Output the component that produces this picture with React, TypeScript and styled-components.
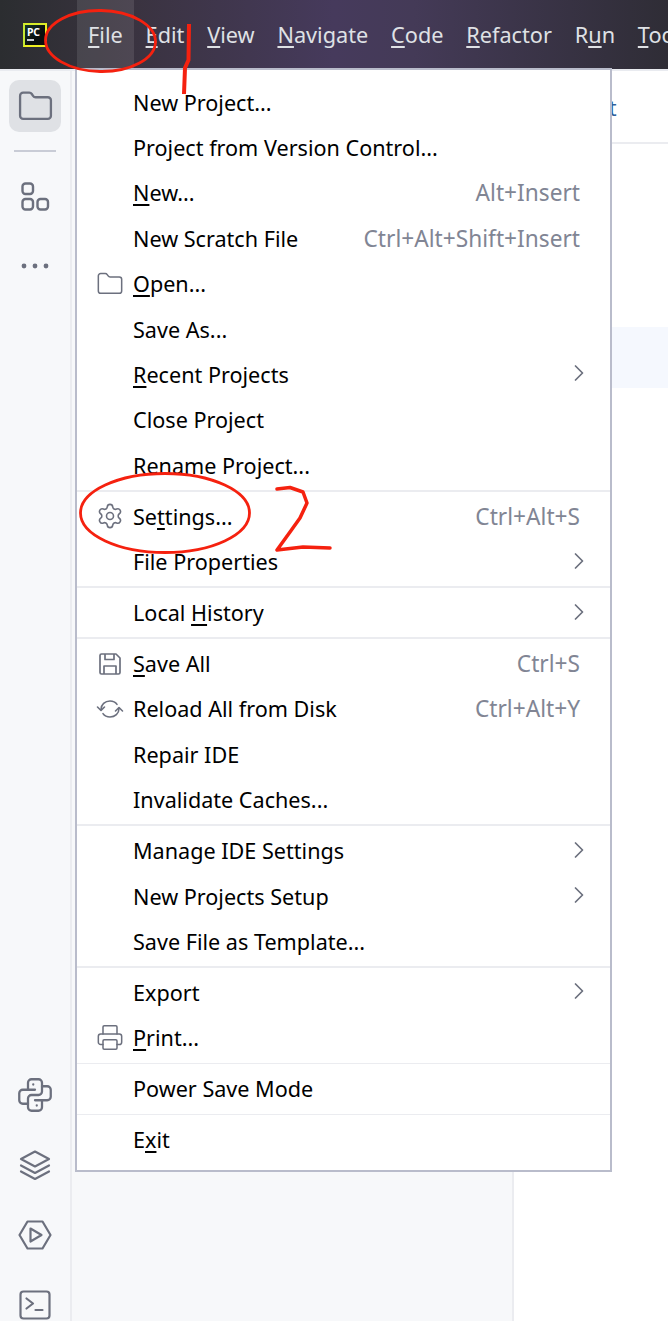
import React from 'react';
import styled, { createGlobalStyle } from 'styled-components';
import { ChevronRight, Folder, Printer, Settings } from 'lucide-react';
import { TbBrandPython } from 'react-icons/tb';

const GlobalStyle = createGlobalStyle`
	html,
	body {
		margin: 0;
		padding: 0;
		background: #ffffff;
	}
	* {
		box-sizing: border-box;
	}
`;

const FONT = `'Noto Sans', 'Open Sans', sans-serif`;

const Frame = styled.div`
	position: relative;
	width: 668px;
	height: 1321px;
	overflow: hidden;
	font-family: ${FONT};
	display: flex;
	flex-direction: column;
`;

const TitleBar = styled.header`
	height: 69px;
	flex-shrink: 0;
	display: flex;
	align-items: stretch;
	padding-left: 23px;
	overflow: hidden;
	background: linear-gradient(90deg, #2b2d30 0%, #3a3340 20%, #463a5c 50%, #443a57 62%, #2f2d36 100%);
`;

const Logo = styled.div`
	width: 24px;
	height: 24px;
	margin-top: 23px;
	margin-right: 30px;
	flex-shrink: 0;
	border: 2.5px solid #f0f020;
	border-top-color: #d8ec28;
	border-left-color: #c4e832;
	background: linear-gradient(135deg, #17352a 0%, #0a0f0d 60%);
	color: #ffffff;
	font-size: 10.5px;
	font-weight: 700;
	line-height: 12px;
	padding: 1px 0 0 2px;
	letter-spacing: -0.2px;
	display: flex;
	flex-direction: column;
	&::after {
		content: '';
		width: 7px;
		height: 1.5px;
		margin-top: 1px;
		background: #c8cbd0;
	}
`;

const MenuBarItem = styled.div<{ $active?: boolean }>`
	display: flex;
	align-items: center;
	padding: 0 11.7px 0 11.1px;
	flex-shrink: 0;
	color: #dfe1e5;
	font-size: 21.7px;
	background: ${({ $active }) => ($active ? 'rgba(255, 255, 255, 0.1)' : 'transparent')};
`;

const Mnemonic = styled.span`
	text-decoration: underline;
	text-decoration-thickness: 2px;
	text-underline-offset: 2.5px;
	text-decoration-skip-ink: none;
`;

const Body = styled.div`
	flex: 1;
	display: flex;
	min-height: 0;
	border-top: 2px solid #e9ebf0;
`;

const Stripe = styled.nav`
	width: 72px;
	flex-shrink: 0;
	background: #f7f8fa;
	border-right: 2px solid #ebecf0;
	display: flex;
	flex-direction: column;
	justify-content: space-between;
	padding-top: 9px;
	color: #6c707e;
`;

const StripeGroup = styled.div<{ $bottom?: boolean }>`
	display: flex;
	flex-direction: column;
	align-items: center;
	gap: ${({ $bottom }) => ($bottom ? '18px' : '17px')};
	margin-bottom: ${({ $bottom }) => ($bottom ? '-10px' : '0')};
`;

const StripeButton = styled.div<{ $selected?: boolean }>`
	width: 52px;
	height: 52px;
	flex-shrink: 0;
	display: flex;
	align-items: center;
	justify-content: center;
	border-radius: 10px;
	background: ${({ $selected }) => ($selected ? '#dfe1e5' : 'transparent')};
`;

const StripeDivider = styled.div`
	width: 42px;
	height: 2px;
	margin: 1px 0 2px;
	background: #c9ccd6;
`;

const ProjectPanel = styled.aside`
	width: 442px;
	flex-shrink: 0;
	background: #f7f8fa;
	border-right: 2px solid #ebecf0;
`;

const EditorArea = styled.main`
	flex: 1;
	background: #ffffff;
	display: flex;
	flex-direction: column;
`;

const EditorHeader = styled.div`
	height: 73px;
	flex-shrink: 0;
	border-bottom: 2px solid #ebecf0;
	padding: 24px 0 0 95px;
	color: #2f5f9a;
	font-size: 21px;
	line-height: 26px;
`;

const SelectedRow = styled.div`
	height: 61px;
	margin-top: 183px;
	background: #f5f8fe;
`;

const Menu = styled.div`
	position: absolute;
	left: 75px;
	top: 68px;
	width: 537px;
	height: 1104px;
	background: #ffffff;
	border: 2px solid #b9bccb;
	padding: 9.4px 0 6px;
	display: flex;
	flex-direction: column;
`;

const MenuRow = styled.div`
	height: 45.4px;
	flex-shrink: 0;
	display: flex;
	align-items: center;
	padding: 0 30px 0 56px;
	position: relative;
	color: #000000;
	font-size: 21.6px;
`;

const RowIcon = styled.span`
	position: absolute;
	left: 19px;
	top: 50%;
	transform: translateY(-50%);
	width: 28px;
	height: 28px;
	display: flex;
	align-items: center;
	justify-content: center;
	color: #6c707e;
`;

const RowLabel = styled.span`
	flex: 1;
	white-space: nowrap;
`;

const Shortcut = styled.span`
	color: #818594;
	white-space: nowrap;
	font-size: 22.7px;
`;

const Arrow = styled.span`
	display: flex;
	color: #6c707e;
	margin-right: -13px;
	margin-top: -2px;
`;

const Separator = styled.div`
	height: 1.6px;
	flex-shrink: 0;
	margin: 2px 0;
	background: #ebecf0;
`;

const Annotations = styled.svg`
	position: absolute;
	left: 0;
	top: 0;
	width: 668px;
	height: 1321px;
	pointer-events: none;
`;

type Entry =
	| 'separator'
	| {
			label: string;
			at?: number;
			shortcut?: string;
			submenu?: boolean;
			icon?: React.ReactNode;
	  };

function ReloadIcon() {
	return (
		<svg width="28" height="26" viewBox="0 0 28 26" fill="none" stroke="currentColor" strokeWidth="1.6" strokeLinecap="round" strokeLinejoin="round">
			<path d="M5 13.5C5 8.5 9 5 14 5c3 0 5.5 1.2 7 3.4" />
			<path d="M23 12.5c0 5-4 8.5-9 8.5-3 0-5.5-1.2-7-3.4" />
			<path d="M1.5 11 5 14.5 8.5 11" />
			<path d="M19.5 15 23 11.5l3.5 3.5" />
		</svg>
	);
}

function SaveIcon() {
	return (
		<svg width="24" height="24" viewBox="0 0 24 24" fill="none" stroke="currentColor" strokeWidth="1.7" strokeLinejoin="round">
			<path d="M2 3.500A1.500 1.500 0 0 1 3.500 2H18l4 4v14.500a1.500 1.500 0 0 1-1.500 1.500h-17A1.500 1.500 0 0 1 2 20.500Z" />
			<path d="M7 2v5.500h9V2" />
			<path d="M6 22v-8h12v8" />
		</svg>
	);
}

const ENTRIES: Entry[] = [
	{ label: 'New Project...' },
	{ label: 'Project from Version Control...' },
	{ label: 'New...', at: 0, shortcut: 'Alt+Insert' },
	{ label: 'New Scratch File', shortcut: 'Ctrl+Alt+Shift+Insert' },
	{ label: 'Open...', at: 0, icon: <Folder size={28} strokeWidth={1.3} /> },
	{ label: 'Save As...' },
	{ label: 'Recent Projects', at: 0, submenu: true },
	{ label: 'Close Project' },
	{ label: 'Rename Project...' },
	'separator',
	{ label: 'Settings...', at: 2, shortcut: 'Ctrl+Alt+S', icon: <Settings size={28} strokeWidth={1.35} /> },
	{ label: 'File Properties', submenu: true },
	'separator',
	{ label: 'Local History', at: 6, submenu: true },
	'separator',
	{ label: 'Save All', at: 0, shortcut: 'Ctrl+S', icon: <SaveIcon /> },
	{ label: 'Reload All from Disk', shortcut: 'Ctrl+Alt+Y', icon: <ReloadIcon /> },
	{ label: 'Repair IDE' },
	{ label: 'Invalidate Caches...' },
	'separator',
	{ label: 'Manage IDE Settings', submenu: true },
	{ label: 'New Projects Setup', submenu: true },
	{ label: 'Save File as Template...' },
	'separator',
	{ label: 'Export', submenu: true },
	{ label: 'Print...', at: 0, icon: <Printer size={29} strokeWidth={1.3} /> },
	'separator',
	{ label: 'Power Save Mode' },
	'separator',
	{ label: 'Exit', at: 1 },
];

const MAIN_MENU: { label: string; at: number }[] = [
	{ label: 'File', at: 0 },
	{ label: 'Edit', at: 0 },
	{ label: 'View', at: 0 },
	{ label: 'Navigate', at: 0 },
	{ label: 'Code', at: 0 },
	{ label: 'Refactor', at: 0 },
	{ label: 'Run', at: 1 },
	{ label: 'Tools', at: 0 },
];

function withMnemonic(label: string, at?: number) {
	if (at === undefined) return label;
	return (
		<>
			{label.slice(0, at)}
			<Mnemonic>{label[at]}</Mnemonic>
			{label.slice(at + 1)}
		</>
	);
}

function PluginsIcon() {
	return (
		<svg width="30" height="30" viewBox="0 0 30 30" fill="none" stroke="currentColor" strokeWidth="2.4">
			<rect x="2.500" y="1.500" width="10.500" height="10.500" rx="3" />
			<rect x="2.500" y="17" width="10.500" height="10.500" rx="3" />
			<rect x="17.500" y="17" width="10.500" height="10.500" rx="3" />
		</svg>
	);
}

function DotsIcon() {
	return (
		<svg width="30" height="8" viewBox="0 0 30 8" fill="currentColor">
			<circle cx="4" cy="4" r="2.4" />
			<circle cx="15" cy="4" r="2.4" />
			<circle cx="26" cy="4" r="2.4" />
		</svg>
	);
}

function LayersIcon() {
	return (
		<svg width="32" height="32" viewBox="0 0 32 32" fill="none" stroke="currentColor" strokeWidth="2.2" strokeLinejoin="round" strokeLinecap="round">
			<path d="M16 2.500 30 10 16 17.500 2 10Z" />
			<path d="M2 16.500 16 24l14-7.500" />
			<path d="M2 22.500 16 30l14-7.500" />
		</svg>
	);
}

function RunIcon() {
	return (
		<svg width="34" height="30" viewBox="0 0 34 30" fill="none" stroke="currentColor" strokeWidth="2.200" strokeLinejoin="round">
			<path d="M1.500 15 9.500 1.500h15L32.500 15l-8 13.500h-15Z" />
			<path d="M12.500 8.500 23.500 15l-11 6.500Z" />
		</svg>
	);
}

function TerminalIcon() {
	return (
		<svg width="32" height="30" viewBox="0 0 32 30" fill="none" stroke="currentColor" strokeWidth="2.200" strokeLinejoin="round" strokeLinecap="round">
			<rect x="1.500" y="1.500" width="29" height="27" rx="3" />
			<path d="M7.500 8.500 14 13.500 7.500 18.500" />
			<path d="M16.500 20h7" />
		</svg>
	);
}

export default function App() {
	return (
		<Frame>
			<GlobalStyle />
			<TitleBar>
				<Logo>PC</Logo>
				{MAIN_MENU.map((item, index) => (
					<MenuBarItem key={item.label} $active={index === 0}>
						<span>{withMnemonic(item.label, item.at)}</span>
					</MenuBarItem>
				))}
			</TitleBar>
			<Body>
				<Stripe>
					<StripeGroup>
						<StripeButton $selected>
							<Folder size={37} strokeWidth={1.5} />
						</StripeButton>
						<StripeDivider />
						<StripeButton>
							<PluginsIcon />
						</StripeButton>
						<StripeButton>
							<DotsIcon />
						</StripeButton>
					</StripeGroup>
					<StripeGroup $bottom>
						<StripeButton>
							<TbBrandPython size={42} strokeWidth={1.3} />
						</StripeButton>
						<StripeButton>
							<LayersIcon />
						</StripeButton>
						<StripeButton>
							<RunIcon />
						</StripeButton>
						<StripeButton>
							<TerminalIcon />
						</StripeButton>
					</StripeGroup>
				</Stripe>
				<ProjectPanel />
				<EditorArea>
					<EditorHeader>t</EditorHeader>
					<SelectedRow />
				</EditorArea>
			</Body>
			<Menu>
				{ENTRIES.map((entry, index) =>
					entry === 'separator' ? (
						<Separator key={index} />
					) : (
						<MenuRow key={entry.label}>
							{entry.icon && <RowIcon>{entry.icon}</RowIcon>}
							<RowLabel>{withMnemonic(entry.label, entry.at)}</RowLabel>
							{entry.shortcut && <Shortcut>{entry.shortcut}</Shortcut>}
							{entry.submenu && (
								<Arrow>
									<ChevronRight size={28} strokeWidth={1.5} />
								</Arrow>
							)}
						</MenuRow>
					),
				)}
			</Menu>
			<Annotations viewBox="0 0 668 1321" fill="none" stroke="#f5210f" strokeLinecap="round" strokeLinejoin="round">
				<ellipse cx="100.500" cy="41" rx="55" ry="30.500" strokeWidth="2.800" transform="rotate(1 100 41)" />
				<ellipse cx="165" cy="513" rx="84.500" ry="39.500" strokeWidth="2.800" />
				<path d="M189 24 188.500 60 185 68 184 94" strokeWidth="4" strokeLinecap="butt" />
				<path d="M277 489 290 487.500 303 492 307 503 300 518 290 532 277 550 303 547 330 548" strokeWidth="3.500" />
			</Annotations>
		</Frame>
	);
}
